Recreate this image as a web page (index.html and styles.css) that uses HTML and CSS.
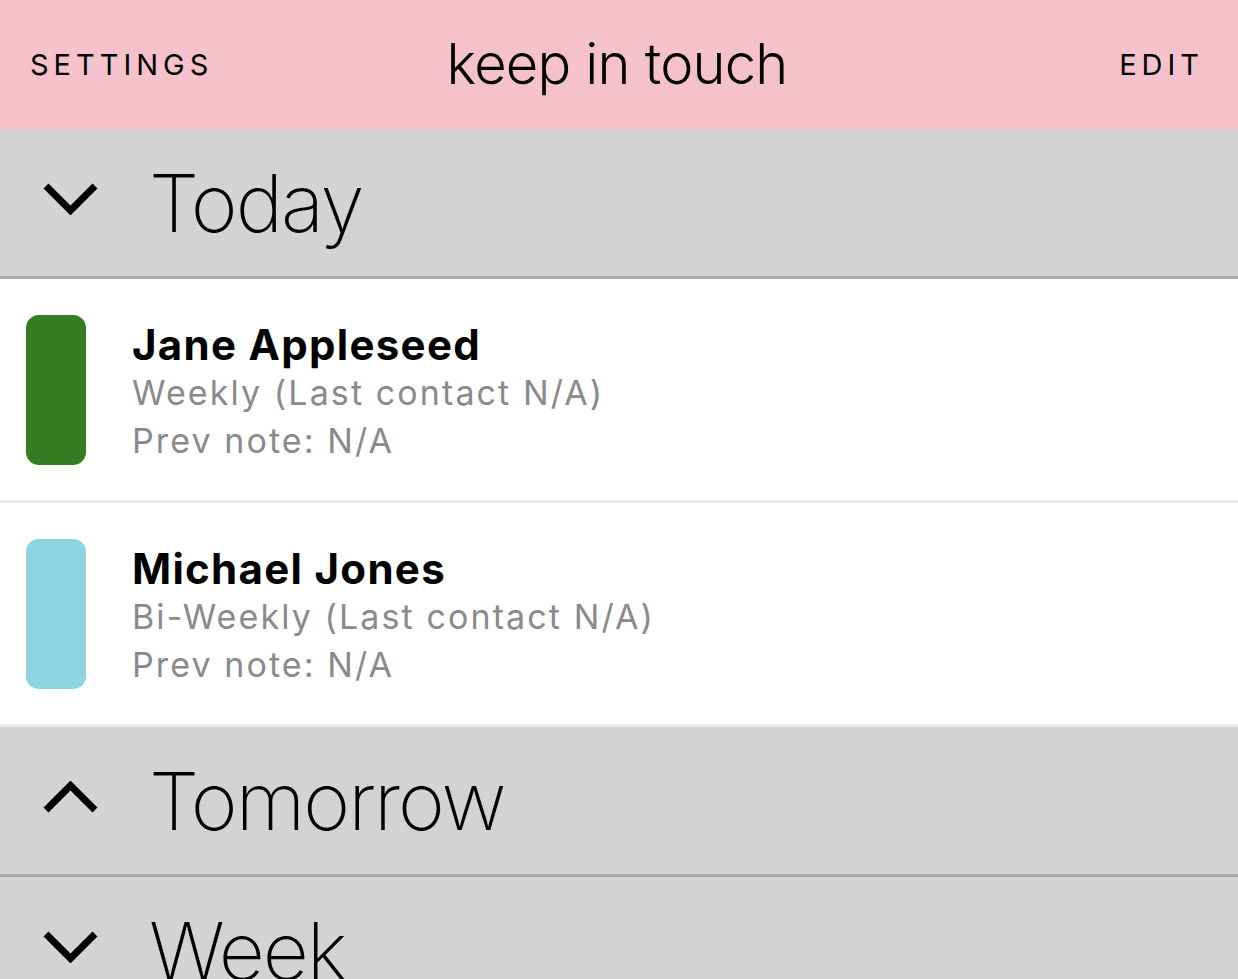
FILE: index.html
```html
<!DOCTYPE html>
<html>
<head>
<meta charset="utf-8">
<link rel="stylesheet" href="styles.css">
</head>
<body>
<div class="app">
  <header class="topbar">
    <span class="nav-btn left">SETTINGS</span>
    <h1 class="title">keep in touch</h1>
    <span class="nav-btn right">EDIT</span>
  </header>

  <section class="group">
    <div class="group-head">
      <svg class="chev" viewBox="0 0 55 32" width="55" height="32"><polyline points="3,3 27.5,27.5 52,3"/></svg>
      <span class="group-title">Today</span>
    </div>
    <div class="row">
      <div class="swatch green"></div>
      <div class="info">
        <div class="name">Jane Appleseed</div>
        <div class="sub">Weekly (Last contact N/A)</div>
        <div class="sub">Prev note: N/A</div>
      </div>
    </div>
    <div class="row">
      <div class="swatch blue"></div>
      <div class="info">
        <div class="name">Michael Jones</div>
        <div class="sub">Bi-Weekly (Last contact N/A)</div>
        <div class="sub">Prev note: N/A</div>
      </div>
    </div>
  </section>

  <section class="group">
    <div class="group-head">
      <svg class="chev" viewBox="0 0 55 32" width="55" height="32"><polyline points="3,29 27.5,4.5 52,29"/></svg>
      <span class="group-title">Tomorrow</span>
    </div>
  </section>

  <section class="group">
    <div class="group-head">
      <svg class="chev" viewBox="0 0 55 32" width="55" height="32"><polyline points="3,3 27.5,27.5 52,3"/></svg>
      <span class="group-title">Week</span>
    </div>
  </section>
</div>
</body>
</html>
```

FILE: styles.css
```css
html, body {
  margin: 0;
  padding: 0;
  height: 100%;
  overflow: hidden;
  background: #ffffff;
}

body {
  font-family: Inter, "Noto Sans", "Liberation Sans", sans-serif;
  color: #000;
}

.app {
  display: flex;
  flex-direction: column;
}

.topbar {
  height: 129px;
  background: #f5c2cb;
  display: grid;
  grid-template-columns: 1fr auto 1fr;
  align-items: center;
  padding: 0 34px 0 30px;
}

.nav-btn {
  font-size: 29px;
  font-weight: 400;
  letter-spacing: 5px;
}

.nav-btn.right {
  justify-self: end;
}

.title {
  margin: 0;
  font-size: 56px;
  font-weight: 300;
  letter-spacing: -0.8px;
  line-height: 1;
  padding-bottom: 2px;
}

.group-head {
  height: 147px;
  background: #d3d3d3;
  border-bottom: 3px solid #aaaaaa;
  display: flex;
  align-items: center;
  padding-left: 43px;
  gap: 51px;
}

.chev {
  flex: none;
  margin-bottom: 8px;
  fill: none;
  stroke: #000;
  stroke-width: 7;
  stroke-linejoin: miter;
  stroke-linecap: butt;
}

.group-title {
  font-size: 80px;
  font-weight: 200;
  letter-spacing: -2px;
  line-height: 1;
}

.row {
  height: 221px;
  border-bottom: 3px solid #ececec;
  display: flex;
  align-items: center;
  padding-left: 26px;
  gap: 46px;
  background: #fff;
}

.swatch {
  width: 60px;
  height: 150px;
  border-radius: 13px;
  flex: none;
}

.swatch.green { background: #367c22; }
.swatch.blue { background: #8dd3e0; }

.info {
  display: flex;
  flex-direction: column;
  padding-top: 6px;
}

.name {
  font-size: 42px;
  font-weight: 700;
  line-height: 48px;
  letter-spacing: 1.3px;
}

.sub {
  font-size: 34px;
  font-weight: 400;
  line-height: 48px;
  color: #8a8a8a;
  letter-spacing: 2.1px;
}
```
